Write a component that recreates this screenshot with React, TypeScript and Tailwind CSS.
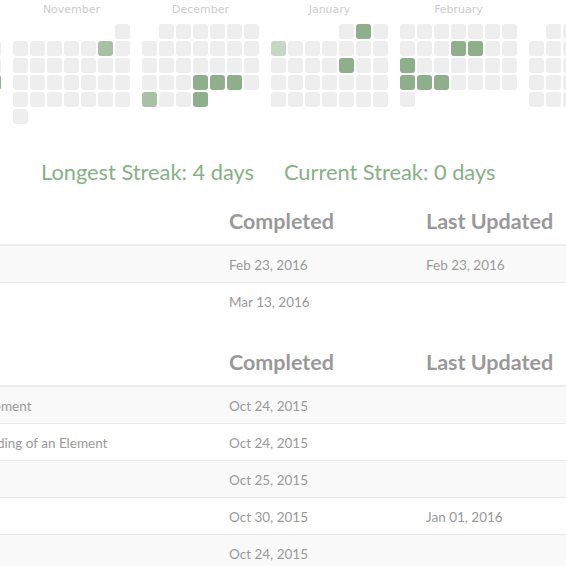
import React from 'react';

type Month = {
  name: string;
  offset: number; // Monday-first column of day 1
  days: number;
  from?: number; // first tracked day
  levels: Record<number, number>;
};

const months: Month[] = [
  { name: 'October', offset: 3, days: 31, from: 5, levels: { 24: 2, 25: 2 } },
  { name: 'November', offset: 6, days: 30, levels: { 7: 1 } },
  { name: 'December', offset: 1, days: 31, levels: { 24: 2, 25: 2, 26: 2, 28: 1, 31: 2 } },
  { name: 'January', offset: 4, days: 31, levels: { 2: 2, 4: 3, 15: 2 } },
  { name: 'February', offset: 0, days: 29, levels: { 11: 2, 12: 2, 15: 2, 22: 2, 23: 2, 24: 2 } },
  { name: 'March', offset: 1, days: 31, levels: {} },
];

const cellColor = (level: number) => {
  if (level === 2) return 'bg-[#8fae8b]';
  if (level === 1) return 'bg-[#a8c1a4]';
  if (level === 3) return 'bg-[#c6d6c4]';
  return 'bg-[#eeeeee]';
};

const MonthBlock: React.FC<{ month: Month }> = ({ month }) => {
  const cells: React.ReactNode[] = [];
  for (let i = 0; i < month.offset; i++) {
    cells.push(<div key={`pad-${i}`} className="h-[15px]" />);
  }
  for (let d = 1; d <= month.days; d++) {
    const hidden = month.from !== undefined && d < month.from;
    cells.push(
      <div
        key={d}
        title={hidden ? undefined : `${month.name} ${d}`}
        className={`h-[15px] rounded-[3px] ${hidden ? '' : cellColor(month.levels[d] ?? 0)}`}
      />
    );
  }
  return (
    <div className="w-[117px] shrink-0">
      <div className="h-[19px] mb-[5px] text-center text-[11px] leading-[19px] text-[#cccccc] font-['DejaVu_Sans',sans-serif]">
        {month.name}
      </div>
      <div className="grid grid-cols-[repeat(7,15px)] gap-[2px]">{cells}</div>
    </div>
  );
};

type Row = { name: string; completed: string; updated?: string };

const DataTable: React.FC<{ rows: Row[] }> = ({ rows }) => (
  <table className="table-fixed border-collapse w-[1040px] mb-[20px]">
    <colgroup>
      <col className="w-[485px]" />
      <col className="w-[197px]" />
      <col />
    </colgroup>
    <thead>
      <tr>
        <th className="p-[8px] text-left font-bold text-[21.5px] leading-[30px] text-[#999999] border-b-2 border-[#ebebeb]">
          Challenge
        </th>
        <th className="p-[8px] text-left font-bold text-[21.5px] leading-[30px] text-[#999999] border-b-2 border-[#ebebeb]">
          Completed
        </th>
        <th className="p-[8px] text-left font-bold text-[21.5px] leading-[30px] text-[#999999] border-b-2 border-[#ebebeb]">
          Last Updated
        </th>
      </tr>
    </thead>
    <tbody>
      {rows.map((r, i) => (
        <tr key={i} className={i % 2 === 0 ? 'bg-[#f9f9f9]' : 'bg-white'}>
          <td className="px-[8px] pt-[9px] pb-[7px] text-[13.5px] leading-[20px] text-[#999999] border-t border-[#e8e8e8] whitespace-nowrap">
            {r.name}
          </td>
          <td className="px-[8px] pt-[9px] pb-[7px] text-[13.5px] leading-[20px] text-[#999999] border-t border-[#e8e8e8]">
            {r.completed}
          </td>
          <td className="px-[8px] pt-[9px] pb-[7px] text-[13.5px] leading-[20px] text-[#999999] border-t border-[#e8e8e8]">
            {r.updated ?? ''}
          </td>
        </tr>
      ))}
    </tbody>
  </table>
);

const projects: Row[] = [
  { name: 'Build a Tribute Page', completed: 'Feb 23, 2016', updated: 'Feb 23, 2016' },
  { name: 'Build a Portfolio', completed: 'Mar 13, 2016' },
];

const challenges: Row[] = [
  { name: 'Add Different Margin to Each Side of an Element', completed: 'Oct 24, 2015' },
  { name: 'Use Clockwise Notation to Specify the Padding of an Element', completed: 'Oct 24, 2015' },
  { name: 'Say Hello to HTML Elements', completed: 'Oct 25, 2015' },
  { name: 'Create a Bulleted List', completed: 'Oct 30, 2015', updated: 'Jan 01, 2016' },
  { name: 'Add Borders Around', completed: 'Oct 24, 2015' },
];

export default function App() {
  return (
    <div className="w-[566px] h-[566px] overflow-hidden bg-white font-['Lato',sans-serif]">
      <div className="flex gap-[12px] -ml-[116px] h-[124px]">
        {months.map((m) => (
          <MonthBlock key={m.name} month={m} />
        ))}
      </div>

      <div className="flex gap-[30px] pl-[41px] mt-[33px] mb-[11px] h-[30px] items-center text-[21.8px] leading-[30px] text-[#85b185]">
        <span>Longest Streak: 4 days</span>
        <span>Current Streak: 0 days</span>
      </div>

      <div className="-ml-[264px]">
        <DataTable rows={projects} />
        <DataTable rows={challenges} />
      </div>
    </div>
  );
}
